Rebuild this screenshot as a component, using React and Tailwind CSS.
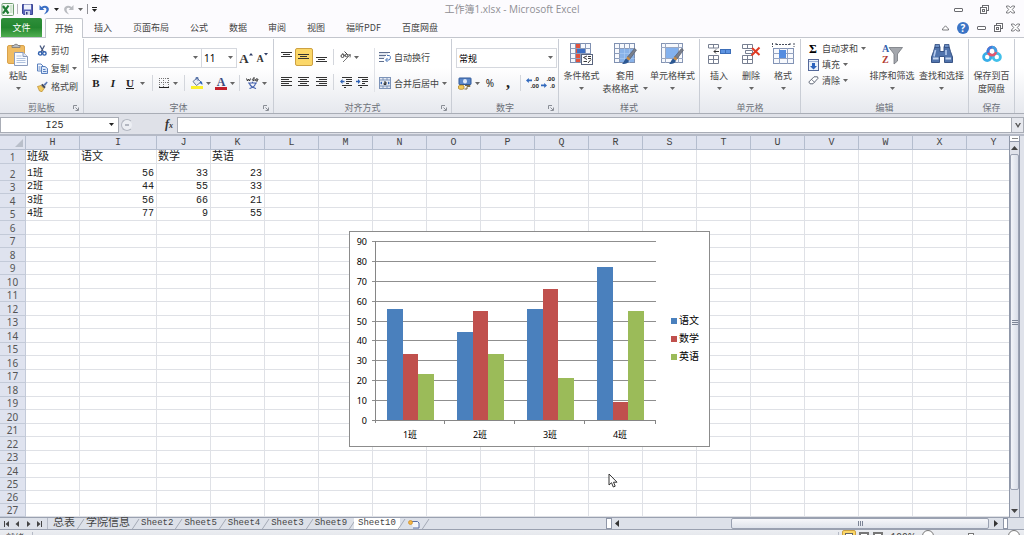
import React from "react";

const MENU_TABS = ["插入", "页面布局", "公式", "数据", "审阅", "视图", "福昕PDF", "百度网盘"];

const COLUMNS = ["H", "I", "J", "K", "L", "M", "N", "O", "P", "Q", "R", "S", "T", "U", "V", "W", "X", "Y"];

const CELLS = [
  ["班级", "语文", "数学", "英语"],
  ["1班", 56, 33, 23],
  ["2班", 44, 55, 33],
  ["3班", 56, 66, 21],
  ["4班", 77, 9, 55],
];

const ROWS = Array.from({ length: 27 }, (_, i) => i + 1);

const SHEETS = ["总表", "学院信息", "Sheet2", "Sheet5", "Sheet4", "Sheet3", "Sheet9"];

const SERIES = [
  { name: "语文", color: "#4a80bd" },
  { name: "数学", color: "#c0504d" },
  { name: "英语", color: "#9bbb59" },
];

function Caret({ dark }) {
  return (
    <svg width="5" height="3" viewBox="0 0 5 3" className="shrink-0">
      <path d="M0 0h5L2.5 3z" fill={dark ? "#222" : "#666"} />
    </svg>
  );
}

function Divider() {
  return <span className="h-4 w-px shrink-0 bg-[#d3d6dc]" />;
}

/* ---------- window icons ---------- */

function MinIcon() {
  return (
    <svg width="9" height="9" viewBox="0 0 9 9">
      <rect x="0.5" y="3.5" width="8" height="3" rx="0.5" fill="#fff" stroke="#6b6b70" />
    </svg>
  );
}

function RestoreIcon() {
  return (
    <svg width="9" height="9" viewBox="0 0 9 9" fill="#fff" stroke="#6b6b70">
      <rect x="2.5" y="0.5" width="6" height="5" />
      <rect x="0.5" y="2.5" width="6" height="6" />
      <rect x="2.5" y="4.5" width="2" height="2" />
    </svg>
  );
}

function CloseIcon() {
  return (
    <svg width="9" height="9" viewBox="0 0 9 9">
      <path d="M0.5 1h2.3l1.7 1.8L6.2 1h2.3v1L6.3 4.5l2.2 2.5v1H6.2L4.5 6.2 2.8 8H0.5V7l2.2-2.5L0.5 2z" fill="#fff" stroke="#6b6b70" strokeWidth="0.9" />
    </svg>
  );
}

/* ---------- quick access icons ---------- */

function ExcelIcon() {
  return (
    <svg width="13" height="13" viewBox="0 0 13 13">
      <rect x="1" y="0.5" width="11.5" height="12" rx="1" fill="#f4faf4" stroke="#6f9d72" />
      <path d="M9 3h2.5M9 5h2.5M9 7h2.5M9 9h2.5" stroke="#9fc5a0" strokeWidth="0.8" />
      <path d="M2 3l5.5 7.5M7.5 2.5L2 10.5" stroke="#1f7c35" strokeWidth="2.2" />
    </svg>
  );
}

function SaveIcon() {
  return (
    <svg width="11" height="11" viewBox="0 0 11 11">
      <path d="M0.5 0.5h10v10h-9l-1-1z" fill="#5a64b8" stroke="#3c4594" />
      <rect x="2" y="0.5" width="7" height="5" fill="#eef1fb" />
      <rect x="3" y="7" width="5" height="4" fill="#cfd5ea" />
      <rect x="4" y="8" width="1.5" height="2.5" fill="#333a7a" />
    </svg>
  );
}

function UndoIcon({ color, flip }) {
  return (
    <svg width="11" height="11" viewBox="0 0 11 11" className={flip ? "-scale-x-100" : ""}>
      <path d="M0.5 1v5h5L3.8 4.4C6 3 8 4.2 7.3 6.6 7 8 6 9.2 4.8 10.4 8 9.4 10 7.5 9.9 5 9.7 1.8 5.5 0.5 2.4 3z" fill={color} />
    </svg>
  );
}

/* ---------- ribbon icons ---------- */

function PasteIcon() {
  return (
    <svg width="22" height="23" viewBox="0 0 22 23">
      <rect x="0.5" y="2.5" width="17" height="18" rx="1.5" fill="#f0bc62" stroke="#d9a24c" />
      <path d="M5 4.5V2.5h2C7 0.8 11 0.8 11 2.5h2v2z" fill="#b9bcc2" stroke="#777" strokeWidth="0.8" />
      <path d="M7.5 9.5h8.5l4.5 4v9h-13z" fill="#fafcff" stroke="#8b9bbb" />
      <path d="M16 9.5v4h4.5" fill="#dfe7f5" stroke="#8b9bbb" />
      <path d="M9.5 13h5M9.5 15.5h9M9.5 17.5h9M9.5 19.5h9" stroke="#9db2d6" strokeWidth="0.8" />
    </svg>
  );
}

function CutIcon() {
  return (
    <svg width="11" height="11" viewBox="0 0 11 11" fill="none">
      <path d="M3 0.5l3.5 6.5M7.5 0.5L4 7" stroke="#4a5a80" strokeWidth="1.3" />
      <circle cx="3.2" cy="8.4" r="1.7" stroke="#2e5fae" strokeWidth="1.4" />
      <circle cx="7.4" cy="8.4" r="1.7" stroke="#2e5fae" strokeWidth="1.4" />
    </svg>
  );
}

function CopyIcon() {
  return (
    <svg width="11" height="11" viewBox="0 0 11 11" fill="#f7faff" stroke="#4a74b8" strokeWidth="0.9">
      <path d="M0.5 1h3.5l2 2v5h-5.5z" />
      <path d="M4.5 3.5H8l2.5 2V10.5h-6z" fill="#dde9fb" />
      <path d="M1.5 4h2M1.5 6h2M6 6.5h2.5M6 8.5h3.5" />
    </svg>
  );
}

function BrushIcon() {
  return (
    <svg width="11" height="11" viewBox="0 0 11 11">
      <path d="M0.5 5.5L4 4.5l3 3-2 3.2-2.5-0.7z" fill="#f1cb62" stroke="#bb8b29" strokeWidth="0.7" />
      <path d="M4 4l1.5-1.2 3.2 3.2L7.3 7.5z" fill="#444a58" />
      <path d="M6.5 3.5L9.8 0.5l0.9 1L8 5z" fill="#5b79b5" />
    </svg>
  );
}

function BorderIcon() {
  return (
    <svg width="10" height="10" viewBox="0 0 10 10" stroke="#777" strokeDasharray="1 1">
      <path d="M0 0.5h10M0 4.5h10M0.5 0v9M4.5 0v9M9.5 0v9" />
      <path d="M0 9.5h10" stroke="#222" strokeDasharray="none" />
    </svg>
  );
}

function FillIcon() {
  return (
    <svg width="12" height="12" viewBox="0 0 12 12">
      <path d="M2 4.5L6 1l4 4-4.5 3.5z" fill="#e8edf6" stroke="#5a6b8d" strokeWidth="0.9" />
      <path d="M5 3V0.5h2V4" fill="none" stroke="#4f6eaa" strokeWidth="0.9" />
      <path d="M9.5 4c1.5 0.5 2.3 2 1.8 4C10.5 7 9.5 6.5 8.5 6z" fill="#2f65b9" />
      <rect y="9" width="12" height="3" fill="#fbf02c" />
    </svg>
  );
}

function PhoneticIcon() {
  return (
    <svg width="13" height="12" viewBox="0 0 13 12" fill="none">
      <path d="M0.5 1.5l1 2.5 1-2 1 2 1-2.5M8 0v4M8 2C6 1 5.5 4 8 3.5M9.5 3h2.5c0-2-2.5-1.5-2.5 0 0 1.3 1.5 1.3 2.5 0.7" stroke="#333" />
      <path d="M2 6h9M6.5 4.8V6M3.5 11.5C7 10.5 9 9 9.5 6.5M3.5 6.5c0.8 2.5 3 4 6.5 5" stroke="#4461ae" strokeWidth="1.2" />
    </svg>
  );
}

function LinesIcon({ lines, top }) {
  return (
    <svg width="12" height="12" viewBox="0 0 12 12" stroke="#333">
      {lines.map(([x1, x2], i) => (
        <path key={i} d={`M${x1} ${top + i * 2 + 0.5}H${x2}`} />
      ))}
    </svg>
  );
}

function OrientIcon() {
  return (
    <svg width="12" height="12" viewBox="0 0 12 12" fill="none" stroke="#444">
      <circle cx="2.5" cy="5" r="1.5" />
      <path d="M2.5 2.2l3 3M4.5 0.5l3.5 3.5" />
      <circle cx="6.5" cy="4.5" r="1.3" />
      <path d="M3 11l7-7M10.5 3.5l-3 0.5M10.5 3.5L10 6.5" stroke="#777" />
    </svg>
  );
}

function IndentIcon({ flip }) {
  return (
    <svg width="12" height="11" viewBox="0 0 12 11">
      <path d="M2 0.5h10M6 2.5h6M6 4.5h6M6 6.5h3M2 8.5h10M4 10.5h2" stroke="#333" />
      <path d={flip ? "M4.5 4.5L2 2v1.8H0v1.5h2V7z" : "M0 4.5L2.5 2v1.8h2v1.5h-2V7z"} fill="#2f62b5" />
    </svg>
  );
}

function WrapIcon() {
  return (
    <svg width="12" height="11" viewBox="0 0 12 11" fill="none">
      <path d="M0 0.5h11M0 3.5h7M0 6.5h5M0 9.5h5" stroke="#5f6f8f" />
      <path d="M0 2h9M0 5h6" stroke="#c4cede" />
      <path d="M8 3.5h2.5c1.3 0.5 1.3 4-0.5 4.5H7M8.5 6L6.5 8l2 2" stroke="#4774b9" />
    </svg>
  );
}

function MergeIcon() {
  return (
    <svg width="12" height="12" viewBox="0 0 12 12">
      <rect x="0.5" y="0.5" width="11" height="11" fill="#e3e9f3" stroke="#7d93b8" />
      <path d="M0 3h12M0 9h12M4 0v3M8 0v3M4 9v3M8 9v3" stroke="#7d93b8" />
      <path d="M1 6l2-1.5v3zM11 6L9 4.5v3z" fill="#2b5eb0" />
      <path d="M5 5h2v2.5H5V6.2h2" fill="none" stroke="#222" strokeWidth="0.9" />
    </svg>
  );
}

function MoneyIcon() {
  return (
    <svg width="14" height="13" viewBox="0 0 14 13">
      <rect x="1" y="1" width="12" height="6.5" rx="0.5" fill="#5b87c9" stroke="#2f5796" />
      <ellipse cx="7" cy="4.2" rx="2" ry="2.2" fill="#dfe9f8" />
      <path d="M0.5 9c1-1.2 4.5-1.2 5.5 0v2.5c-1 1.2-4.5 1.2-5.5 0z" fill="#f1c856" stroke="#a67c1e" strokeWidth="0.7" />
      <path d="M7 8.5h5v1H9v2.5H6.5" fill="none" stroke="#7b6a42" />
    </svg>
  );
}

function DecimalIcon({ less }) {
  return (
    <span className="relative block h-3.5 w-3 text-right text-[6px] leading-[7px] font-bold text-[#333]">
      <span className="block">{less ? ".00" : ".0"}</span>
      <span className="block">{less ? ".0" : ".00"}</span>
      <svg width="6" height="5" viewBox="0 0 6 5" className={less ? "absolute bottom-0.5 -left-0.5 -scale-x-100" : "absolute top-0.5 -left-px"}>
        <path d="M0 2.5L2.8 0v1.6H6v1.6H2.8V5z" fill="#3169bd" />
      </svg>
    </span>
  );
}

function GridBase() {
  return (
    <>
      <rect x="0.5" y="0.5" width="20" height="19" fill="#f7f9fd" stroke="#7f90b1" />
      <path d="M0.5 5.5h20M0.5 10.5h20M0.5 15.5h20M5.5 0.5v19M10.5 0.5v19M15.5 0.5v19" stroke="#8c9cba" />
    </>
  );
}

function Brush() {
  return (
    <>
      <path d="M20.5 5.5L22.5 7 16 16l-2.5-2z" fill="#7a7f8b" stroke="#4e535e" strokeWidth="0.6" />
      <path d="M13.5 13.5l2.8 2.2-1.3 2-2.8-2z" fill="#c98a42" />
      <path d="M12 15.5l3 2.3C14 20.5 11 21.5 8 21c2-1.5 2-4 4-5.5z" fill="#2b5792" />
    </>
  );
}

function CondIcon() {
  return (
    <svg width="23" height="22" viewBox="0 0 23 22">
      <GridBase />
      <path d="M6 1h4v4H6zM6 6h9v4H6z" fill="#e0523d" />
      <path d="M6 11h4v4H6zM6 16h4v3H6z" fill="#e0523d" />
      <rect x="7" y="6" width="8" height="4" fill="#3d6fc4" />
      <rect x="11.5" y="11.5" width="11" height="10" fill="#fff" stroke="#59647d" />
      <path d="M17 13l-3.5 1.5L17 16.5M13.5 18.5h3.5M18 13.5h3M18 15.5h3M18 20l3-3.5" fill="none" stroke="#222" strokeWidth="0.9" />
    </svg>
  );
}

function TableStyleIcon() {
  return (
    <svg width="23" height="22" viewBox="0 0 23 22">
      <GridBase />
      <path d="M6 6h14v13H6z" fill="#6ba0e4" fillOpacity="0.8" />
      <path d="M5.5 10.5h15M5.5 15.5h15M10.5 5.5v14M15.5 5.5v14" stroke="#a9cbf5" strokeWidth="0.8" />
      <Brush />
    </svg>
  );
}

function CellStyleIcon() {
  return (
    <svg width="23" height="22" viewBox="0 0 23 22">
      <rect x="0.5" y="0.5" width="21" height="19" fill="#f7f9fd" stroke="#8595b4" />
      <path d="M0 4.5h22M0 15.5h22M4.5 0v20M17.5 0v20" stroke="#9aa8c3" />
      <rect x="5" y="5" width="12" height="10" fill="#83b1ee" />
      <Brush />
    </svg>
  );
}

function InsertIcon() {
  return (
    <svg width="23" height="20" viewBox="0 0 23 20" fill="#fff" stroke="#777f91">
      <path d="M0.5 0.5h10v3.5h-10zM5.5 0.5v3.5M0.5 11.5h10v8h-10zM0.5 15.5h10M5.5 11.5v8" />
      <rect x="12.5" y="5.5" width="10" height="4" fill="#5d93e1" stroke="#3d6eb8" />
      <path d="M17.5 5.5v4" stroke="#3d6eb8" />
      <path d="M11 7.5H6M8 5.5l-2 2 2 2" fill="none" stroke="#333" />
    </svg>
  );
}

function DeleteIcon() {
  return (
    <svg width="20" height="20" viewBox="0 0 20 20" fill="#fff" stroke="#777f91">
      <path d="M1.5 0.5h10v4h-10zM6.5 0.5v4M1.5 11.5h10v8h-10zM1.5 15.5h10M6.5 11.5v8M4.5 6.5h7v3h-7z" />
      <path d="M11 4l7.5 7M18.5 3.5L10.5 11.5" stroke="#df3a24" strokeWidth="2" />
    </svg>
  );
}

function FormatIcon() {
  return (
    <svg width="23" height="22" viewBox="0 0 23 22">
      <path d="M0.5 0v4M4 1.5h14M22 0v4M4 0v3M18 0v3" stroke="#454c5b" strokeDasharray="2 1" />
      <rect x="1.5" y="5.5" width="20" height="15" fill="#f7f9fd" stroke="#8293b5" />
      <path d="M1 10.5h21M1 15.5h21M7.5 5v16M15.5 5v16" stroke="#94a3c1" />
      <rect x="7" y="7" width="7" height="8" fill="#548ce0" />
    </svg>
  );
}

function SortIcon() {
  return (
    <svg width="22" height="22" viewBox="0 0 22 22" className="font-['Liberation_Serif',serif] text-[10px] font-bold">
      <path d="M8 4.5h13.5L16.5 11v7l-3.5 3V11z" fill="#a4a7ad" stroke="#74777e" strokeWidth="0.8" />
      <text x="1" y="9" fill="#3360ac">A</text>
      <text x="1" y="19.5" fill="#b23a32">Z</text>
    </svg>
  );
}

function FindIcon() {
  return (
    <svg width="22" height="20" viewBox="0 0 22 20">
      <path d="M4 2.5h5v5h4v-5h5l1.5 5 2 5.5v5.5h-8v-6h-5v6h-8V13l2-5.5z" fill="#5174ad" stroke="#2e4a7d" strokeWidth="0.9" />
      <path d="M4 0.5h4.5v3H4zM13.5 0.5H18v3h-4.5z" fill="#6d8fc4" stroke="#2e4a7d" strokeWidth="0.8" />
      <path d="M4.5 6L3 12.5M15 6v5" stroke="#b5cbee" strokeWidth="1.6" />
      <path d="M2 14.5h5.5M14.5 14.5H20" stroke="#c5d5ee" strokeWidth="1.8" />
    </svg>
  );
}

function BaiduIcon() {
  return (
    <svg width="20" height="18" viewBox="0 0 20 18" fill="none" strokeWidth="2.8">
      <circle cx="5.2" cy="12" r="3.6" stroke="#38aee8" />
      <circle cx="14.8" cy="12" r="3.6" stroke="#42c0ea" />
      <circle cx="10" cy="6.2" r="4" stroke="#e4556d" />
      <path d="M6.2 7.8A4.2 4.2 0 0 1 10 2.2" stroke="#3b7fe0" />
      <path d="M10 2.2a4 4 0 0 1 3.8 5" stroke="#3fa0e6" />
    </svg>
  );
}

function FillDownIcon() {
  return (
    <svg width="11" height="12" viewBox="0 0 11 12">
      <rect x="0.5" y="0.5" width="10" height="11" fill="#eaf1fb" stroke="#55699a" />
      <path d="M1 2.5h9" stroke="#9aaed4" />
      <path d="M4 4h3v3h2L5.5 10.5 2 7h2z" fill="#2b62bd" />
    </svg>
  );
}

function EraserIcon() {
  return (
    <svg width="11" height="9" viewBox="0 0 11 9">
      <path d="M0.8 6L6 0.8h3.5l0.5 1.5L5 7.8H2z" fill="#fff" stroke="#555c6c" strokeWidth="0.9" />
      <path d="M3.5 3.3l3 3" stroke="#555c6c" strokeWidth="0.8" />
    </svg>
  );
}

/* ---------- ribbon building blocks ---------- */

function Group({ label, launcher, className, children }) {
  return (
    <section className={"flex shrink-0 flex-col border-r border-[#c9cdd5] " + className}>
      <div className="h-[62px]">{children}</div>
      <div className="relative flex h-3 items-center justify-center text-[#6c7078]">
        {label}
        {launcher && (
          <button aria-label={label + "设置"} className="absolute top-1 right-1">
            <svg width="6" height="6" viewBox="0 0 6 6" fill="none" stroke="#8a8e96">
              <path d="M0.5 4V0.5H4M2.5 2.5L5 5M5.5 2.5v3h-3" />
            </svg>
          </button>
        )}
      </div>
    </section>
  );
}

function BigButton({ icon, label, second, className, noCaret }) {
  return (
    <button className={"flex shrink-0 flex-col items-center whitespace-nowrap " + className}>
      <span className="mb-1 flex h-[22px] items-center">{icon}</span>
      <span className="h-[13px] leading-[13px]">{label}</span>
      <span className="flex h-[13px] items-center gap-1 leading-[13px]">
        {second}
        {!noCaret && <Caret />}
      </span>
    </button>
  );
}

function SmallButton({ icon, label, caret }) {
  return (
    <button className="flex items-center gap-[3px] whitespace-nowrap">
      <span className="flex w-3 justify-center">{icon}</span>
      {label}
      {caret && <Caret />}
    </button>
  );
}

function IconButton({ label, className, children }) {
  return (
    <button aria-label={label} className={"flex h-4 shrink-0 items-center justify-center " + className}>
      {children}
    </button>
  );
}

function Combo({ label, value, className }) {
  return (
    <label className={"relative block shrink-0 " + className}>
      <select aria-label={label} className="block h-5 w-full appearance-none border border-[#d5d8de] bg-white pl-0.5 text-black outline-none">
        <option>{value}</option>
      </select>
      <span className="pointer-events-none absolute top-2 right-1">
        <Caret />
      </span>
    </label>
  );
}

/* ---------- top of the window ---------- */

function TitleBar() {
  return (
    <header className="grid h-[18px] grid-cols-[1fr_auto_1fr] items-center">
      <div className="flex items-center pl-px">
        <ExcelIcon />
        <span className="mx-[3px] h-2.5 w-px bg-[#b5b5ba]" />
        <button aria-label="保存" className="ml-px"><SaveIcon /></button>
        <button aria-label="撤消" className="ml-1.5 flex items-center gap-1"><UndoIcon color="#3b6fc5" /><Caret dark /></button>
        <button aria-label="恢复" className="ml-1 flex items-center gap-1"><UndoIcon color="#b9bbc0" flip /><Caret /></button>
        <span className="mx-1 h-2.5 w-px bg-[#909096]" />
        <button aria-label="自定义快速访问工具栏" className="flex flex-col items-center gap-px">
          <span className="h-px w-[5px] bg-[#222]" />
          <Caret dark />
        </button>
      </div>
      <h1 className="font-['Open_Sans','Noto_Sans_CJK_SC',sans-serif] text-[10px] text-[#8f8f94]">工作簿1.xlsx - Microsoft Excel</h1>
      <div className="flex justify-end gap-[17px] pr-[9px]">
        <button aria-label="最小化"><MinIcon /></button>
        <button aria-label="还原"><RestoreIcon /></button>
        <button aria-label="关闭"><CloseIcon /></button>
      </div>
    </header>
  );
}

function MenuTabs() {
  return (
    <nav className="flex h-5 items-stretch border-b border-[#c3c6cd] text-[#444]">
      <button className="ml-px w-[41px] rounded-t-xs bg-linear-to-b from-[#2f8f3b] via-[#23862f] to-[#4fae50] text-white">文件</button>
      <button className="-mb-px ml-[3px] rounded-t-xs border border-b-0 border-[#c3c6cd] bg-white px-[9px]">开始</button>
      {MENU_TABS.map((tab) => (
        <button key={tab} className="ml-px px-2.5">{tab}</button>
      ))}
      <div className="ml-auto flex items-center gap-2 pr-1">
        <button aria-label="折叠功能区">
          <svg width="7" height="6" viewBox="0 0 7 6" fill="#fff" stroke="#6b6b70" strokeWidth="0.9">
            <path d="M3.5 0.8L6.5 4v1h-6V4z" />
          </svg>
        </button>
        <button aria-label="帮助" className="h-3 w-3 rounded-full bg-[#3b74c6] font-['Open_Sans'] text-[10px] leading-3 font-bold text-white">?</button>
        <button aria-label="最小化工作簿"><MinIcon /></button>
        <button aria-label="还原工作簿"><RestoreIcon /></button>
        <button aria-label="关闭工作簿"><CloseIcon /></button>
      </div>
    </nav>
  );
}

function Ribbon() {
  return (
    <div className="flex border-b border-[#a9adb6] bg-linear-to-b from-white from-40% to-[#e6e8ee] pt-px text-[#444]">
      <Group label="剪贴板" launcher className="w-[84px]">
        <div className="flex pt-1">
          <BigButton icon={<PasteIcon />} label="粘贴" className="w-9" />
          <div className="flex flex-col gap-[5px] pt-px">
            <SmallButton icon={<CutIcon />} label="剪切" />
            <SmallButton icon={<CopyIcon />} label="复制" caret />
            <SmallButton icon={<BrushIcon />} label="格式刷" />
          </div>
        </div>
      </Group>

      <Group label="字体" launcher className="w-[190px]">
        <div className="flex items-center pt-[9px] pl-1">
          <Combo label="字体" value="宋体" className="w-[114px]" />
          <Combo label="字号" value="11" className="-ml-px w-9 font-['Noto_Sans'] text-[10px]" />
          <IconButton label="增大字号" className="ml-0.5 w-3.5 font-['Liberation_Serif'] text-[13px] font-bold text-[#333]">
            A<svg width="4" height="10" viewBox="0 0 4 10"><path d="M0 2.5L2 0l2 2.5z" fill="#2f3d66" /></svg>
          </IconButton>
          <IconButton label="减小字号" className="ml-0.5 w-3.5 font-['Liberation_Serif'] text-[10px] font-bold text-[#333]">
            A<svg width="4" height="10" viewBox="0 0 4 10"><path d="M0 0h4L2 2.5z" fill="#2f3d66" /></svg>
          </IconButton>
        </div>
        <div className="flex items-center pt-[7px] pl-1 font-['Liberation_Serif'] text-[11px] text-[#222]">
          <IconButton label="加粗" className="w-4 font-bold">B</IconButton>
          <IconButton label="倾斜" className="w-[18px] font-bold italic">I</IconButton>
          <IconButton label="下划线" className="w-4 font-bold underline">U</IconButton>
          <IconButton label="下划线选项" className="mr-1.5 w-2"><Caret /></IconButton>
          <Divider />
          <IconButton label="边框" className="mx-1.5 gap-1"><BorderIcon /><Caret /></IconButton>
          <Divider />
          <IconButton label="填充颜色" className="ml-1.5 gap-[3px]"><FillIcon /><Caret /></IconButton>
          <IconButton label="字体颜色" className="mx-1 gap-[3px]">
            <span className="block h-3.5 w-3 border-b-3 border-[#c3202b] text-[12px] leading-3 font-bold text-[#3a4a80]">A</span>
            <Caret />
          </IconButton>
          <Divider />
          <IconButton label="拼音" className="ml-1.5 gap-[3px]"><PhoneticIcon /><Caret /></IconButton>
        </div>
      </Group>

      <Group label="对齐方式" launcher className="w-[178px]">
        <div className="flex pt-[9px] pl-1">
          <div className="flex flex-col gap-[7px]">
            <div className="flex h-[18px] items-center">
              <IconButton label="顶端对齐" className="w-[17px]"><LinesIcon top={1} lines={[[0, 11], [2, 9], [0, 11]]} /></IconButton>
              <IconButton label="垂直居中" className="h-[18px] w-[18px] rounded-xs border border-[#cda142] bg-[#fbd768]"><LinesIcon top={3} lines={[[0, 11], [2, 9], [0, 11]]} /></IconButton>
              <IconButton label="底端对齐" className="w-[18px]"><LinesIcon top={6} lines={[[0, 11], [2, 9], [0, 11]]} /></IconButton>
              <span className="mr-1.5 ml-0.5 flex"><Divider /></span>
              <IconButton label="方向" className="gap-0.5"><OrientIcon /><Caret /></IconButton>
            </div>
            <div className="flex h-[18px] items-center">
              <IconButton label="左对齐" className="w-[17px]"><LinesIcon top={1} lines={[[0, 11], [0, 8], [0, 11], [0, 8], [0, 11]]} /></IconButton>
              <IconButton label="居中" className="w-[18px]"><LinesIcon top={1} lines={[[0, 11], [2, 9], [0, 11], [2, 9], [0, 11]]} /></IconButton>
              <IconButton label="右对齐" className="w-[18px]"><LinesIcon top={1} lines={[[0, 11], [3, 11], [0, 11], [3, 11], [0, 11]]} /></IconButton>
              <span className="mr-1.5 ml-0.5 flex"><Divider /></span>
              <IconButton label="减少缩进量"><IndentIcon /></IconButton>
              <IconButton label="增加缩进量" className="ml-1"><IndentIcon flip /></IconButton>
            </div>
          </div>
          <span className="mr-1 ml-1.5 h-11 w-px bg-[#e0e2e7]" />
          <div className="flex flex-col justify-between">
            <span className="flex h-[18px] items-center"><SmallButton icon={<WrapIcon />} label="自动换行" /></span>
            <span className="flex h-[18px] items-center"><SmallButton icon={<MergeIcon />} label="合并后居中" caret /></span>
          </div>
        </div>
      </Group>

      <Group label="数字" launcher className="w-[107px]">
        <div className="pt-[9px] pl-1">
          <Combo label="数字格式" value="常规" className="w-[101px]" />
        </div>
        <div className="flex items-center pt-[7px] pl-1.5 font-['Noto_Sans'] text-[10px] text-[#222]">
          <IconButton label="会计数字格式" className="gap-[3px]"><MoneyIcon /><Caret /></IconButton>
          <IconButton label="百分比样式" className="ml-1 w-3">%</IconButton>
          <IconButton label="千位分隔样式" className="mx-1.5 w-3 font-['Liberation_Serif'] text-[16px] leading-[8px] font-bold">,</IconButton>
          <Divider />
          <IconButton label="增加小数位数" className="ml-1.5"><DecimalIcon /></IconButton>
          <IconButton label="减少小数位数" className="ml-1"><DecimalIcon less /></IconButton>
        </div>
      </Group>

      <Group label="样式" className="w-[141px]">
        <div className="flex pt-1 pl-px">
          <BigButton icon={<CondIcon />} label="条件格式" className="w-[43px]" />
          <BigButton icon={<TableStyleIcon />} label="套用" second="表格格式" className="w-[44px]" />
          <BigButton icon={<CellStyleIcon />} label="单元格样式" className="w-[51px]" />
        </div>
      </Group>

      <Group label="单元格" className="w-[101px]">
        <div className="flex pt-1 pl-[3px]">
          <BigButton icon={<InsertIcon />} label="插入" className="w-8" />
          <BigButton icon={<DeleteIcon />} label="删除" className="w-8" />
          <BigButton icon={<FormatIcon />} label="格式" className="w-8" />
        </div>
      </Group>

      <Group label="编辑" className="w-[168px]">
        <div className="flex pt-[3px] pl-1.5">
          <div className="flex w-[61px] flex-col gap-[3px]">
            <SmallButton icon={<span className="font-['Liberation_Serif'] text-[12px] leading-3 font-bold text-black">Σ</span>} label="自动求和" caret />
            <SmallButton icon={<FillDownIcon />} label="填充" caret />
            <SmallButton icon={<EraserIcon />} label="清除" caret />
          </div>
          <div className="flex pt-px">
            <BigButton icon={<SortIcon />} label="排序和筛选" className="w-12" />
            <BigButton icon={<FindIcon />} label="查找和选择" className="w-[51px]" />
          </div>
        </div>
      </Group>

      <Group label="保存" className="w-[46px]">
        <div className="pt-1">
          <BigButton icon={<BaiduIcon />} label="保存到百" second="度网盘" noCaret className="w-full" />
        </div>
      </Group>
    </div>
  );
}

function FormulaBar() {
  return (
    <div className="flex h-[22px] border-b-2 border-[#b5bac6] bg-[#dfe1e8] pt-[3px] pb-px">
      <div className="relative w-[119px] border border-[#a9adb6] bg-white">
        <input aria-label="名称框" defaultValue="I25" className="block h-3.5 w-[107px] text-center font-['Liberation_Mono'] text-[10px] text-[#333] outline-none" />
        <span className="absolute top-[5px] right-1"><Caret dark /></span>
      </div>
      <div className="flex w-[58px] items-center justify-between pr-1 pl-0.5">
        <span className="flex h-3 w-3 items-center justify-center rounded-full border border-[#b3b7c1] border-r-[#dfe1e8] bg-[#eceef3]">
          <span className="h-0.5 w-1 bg-[#b3b7c1]" />
        </span>
        <button aria-label="插入函数" className="font-['Liberation_Serif'] text-[12px] leading-3 font-bold text-[#333] italic">
          f<span className="text-[8px]">x</span>
        </button>
      </div>
      <input aria-label="编辑栏" className="min-w-0 flex-1 border border-[#a9adb6] bg-white outline-none" />
      <button aria-label="展开编辑栏" className="flex w-3 items-center justify-center border border-l-0 border-[#a9adb6] bg-[#e6e8ee]">
        <svg width="6" height="5" viewBox="0 0 6 5"><path d="M0 0h1.5L3 2.5 4.5 0H6L3 5z" fill="#555" /></svg>
      </button>
    </div>
  );
}

/* ---------- sheet ---------- */

function colWidth(col) {
  return col === "I" ? "w-[77px]" : "w-[54px]";
}

function rowHeight(row) {
  if (row === 2) return "h-[17px]";
  if (row === 26) return "h-[13px]";
  return row === 1 || row % 2 === 0 ? "h-[14px]" : "h-[13px]";
}

function Grid() {
  return (
    <table className="w-max table-fixed border-separate border-spacing-0 font-['Liberation_Mono','Noto_Sans_CJK_SC',monospace] text-[10px] leading-3">
      <colgroup>
        <col className="w-[26px]" />
        {COLUMNS.map((c) => <col key={c} className={colWidth(c)} />)}
      </colgroup>
      <thead>
        <tr className="h-[14px] bg-[#dfe3ef] text-[#444]">
          <th className="border-r border-b border-[#b4bdce] p-0 pr-0.5">
            <svg width="8" height="8" viewBox="0 0 8 8" className="ml-auto"><path d="M8 0v8H0z" fill="#b9bfca" /></svg>
          </th>
          {COLUMNS.map((c) => (
            <th key={c} className="border-r border-b border-[#b4bdce] p-0 align-bottom font-normal">{c}</th>
          ))}
        </tr>
      </thead>
      <tbody>
        {ROWS.map((row) => (
          <tr key={row} className={rowHeight(row)}>
            <th className="border-r border-b border-[#c3cad8] bg-[#dfe3ef] p-0 align-bottom font-['Noto_Sans'] leading-3 font-normal text-[#555]">{row}</th>
            {COLUMNS.map((c, i) => {
              const value = CELLS[row - 1]?.[i];
              return (
                <td
                  key={c}
                  className={
                    "border-r border-b border-[#dfe1e6] p-0 pr-0.5 pl-px align-bottom text-[#222] " +
                    (row === 1 ? "text-[11px] " : "") +
                    (typeof value === "number" ? "text-right" : "text-left")
                  }
                >
                  {value}
                </td>
              );
            })}
          </tr>
        ))}
      </tbody>
    </table>
  );
}

const PLOT = { left: 25, right: 306, bottom: 188, height: 179, max: 90 };

function plotY(value) {
  return PLOT.bottom - Math.round((value * PLOT.height) / PLOT.max);
}

function Chart() {
  const { left, right, bottom } = PLOT;
  const groups = CELLS.slice(1);
  const step = (right - left) / groups.length;
  return (
    <svg width="359" height="214" viewBox="0 0 359 214" className="font-['Noto_Sans','Noto_Sans_CJK_SC',sans-serif] text-[9px]">
      {Array.from({ length: 10 }, (_, i) => {
        const y = plotY(i * 10) + 0.5;
        return (
          <g key={i}>
            <path d={`M${left - 3} ${y}H${right}`} stroke="#8f8f8f" />
            <text x={left - 8} y={y + 3} textAnchor="end">{i * 10}</text>
          </g>
        );
      })}
      {groups.map(([name, ...values], g) => {
        const x = left + Math.floor(g * step);
        return (
          <g key={name}>
            {values.map((v, s) => (
              <rect key={s} x={x + 12 + s * 16 - (s === 2 ? 1 : 0)} y={plotY(v)} width={s === 1 ? 15 : 16} height={bottom - plotY(v)} fill={SERIES[s].color} />
            ))}
            <text x={x + 35} y="206" textAnchor="middle">{name}</text>
          </g>
        );
      })}
      <path d={`M${left - 3} ${bottom + 0.5}H${right}M${left + 0.5} 9V${bottom + 3}`} stroke="#868686" />
      {groups.map(([name], g) => (
        <path key={name} d={`M${left + Math.floor((g + 1) * step) - 0.5} ${bottom}v4`} stroke="#868686" />
      ))}
      {SERIES.map((s, i) => (
        <g key={s.name}>
          <rect x="321" y={86 + i * 18} width="6" height="6" fill={s.color} />
          <text x="329" y={92 + i * 18} className="text-[10px]">{s.name}</text>
        </g>
      ))}
    </svg>
  );
}

function VerticalScroll() {
  return (
    <div className="flex w-[15px] shrink-0 flex-col bg-[#dfe2ea]">
      <div className="mr-1 flex flex-1 flex-col items-stretch border-x border-[#8f97a8]">
        <span className="flex h-1.5 items-center justify-center border-b border-[#8f97a8] bg-white"><span className="h-px w-1.5 bg-[#888]" /></span>
        <button aria-label="向上滚动" className="flex h-3 items-center justify-center">
          <svg width="7" height="4" viewBox="0 0 7 4"><path d="M0 4h7L3.5 0z" fill="#444" /></svg>
        </button>
        <div className="flex flex-1 flex-col items-center justify-center gap-px rounded-xs border border-[#9aa1b1] bg-linear-to-r from-[#f3f5f9] to-[#d9dee8]">
          <span className="h-px w-1.5 bg-[#7d8596]" />
          <span className="h-px w-1.5 bg-[#7d8596]" />
          <span className="h-px w-1.5 bg-[#7d8596]" />
        </div>
        <button aria-label="向下滚动" className="mt-[15px] flex h-3 items-center justify-center">
          <svg width="7" height="4" viewBox="0 0 7 4"><path d="M0 0h7L3.5 4z" fill="#444" /></svg>
        </button>
      </div>
    </div>
  );
}

/* ---------- bottom of the window ---------- */

function Slash() {
  return (
    <svg width="11" height="12" viewBox="0 0 11 12" className="shrink-0">
      <path d="M2 11.5L9 1" stroke="#a3a9b5" />
    </svg>
  );
}

function NavArrow({ label, d }) {
  return (
    <button aria-label={label}>
      <svg width="5" height="6" viewBox="0 0 5 6"><path d={d} fill="#444" /></svg>
    </button>
  );
}

function SheetBar() {
  return (
    <div className="flex h-[13px] items-stretch border-t border-b border-[#9aa1b0] bg-[#dde1e9]">
      <div className="flex w-12 items-center justify-between border-r border-[#b5bac6] pr-[5px] pl-1">
        <NavArrow label="第一张" d="M0 0h1v6H0zM5 0v6L1.5 3z" />
        <NavArrow label="上一张" d="M4 0v6L0.5 3z" />
        <NavArrow label="下一张" d="M1 0v6L4.5 3z" />
        <NavArrow label="最后一张" d="M4 0h1v6H4zM0 0v6L3.5 3z" />
      </div>
      <nav className="flex items-center pl-[5px] font-['Liberation_Mono','Noto_Sans_CJK_SC',monospace] text-[9px] leading-[11px] text-[#444]">
        {SHEETS.map((s) => (
          <React.Fragment key={s}>
            <button className={s.startsWith("Sheet") ? "" : "text-[11px]"}>{s}</button>
            <Slash />
          </React.Fragment>
        ))}
        <button className="-mx-1 h-full bg-white px-1">Sheet10</button>
        <Slash />
        <button aria-label="插入工作表">
          <svg width="13" height="10" viewBox="0 0 13 10">
            <path d="M4.5 2.5h6l1.5 1.5v5h-6" fill="#f4f6fb" stroke="#5a6fa5" />
            <circle cx="3.5" cy="3.5" r="2" fill="#f5b443" stroke="#c98a22" strokeWidth="0.7" />
          </svg>
        </button>
        <Slash />
      </nav>
      <div className="ml-auto flex w-[418px] items-center">
        <span className="h-full w-1.5 border border-[#8f97a8] bg-white" />
        <button aria-label="向左滚动" className="ml-[3px]">
          <svg width="4" height="7" viewBox="0 0 4 7"><path d="M4 0v7L0 3.5z" fill="#333" /></svg>
        </button>
        <div className="ml-28 flex h-full flex-1 items-center justify-center gap-px rounded-xs border border-[#9aa1b1] bg-linear-to-b from-[#f6f7fa] to-[#dfe3eb]">
          <span className="h-[5px] w-px bg-[#7d8596]" />
          <span className="h-[5px] w-px bg-[#7d8596]" />
          <span className="h-[5px] w-px bg-[#7d8596]" />
        </div>
        <button aria-label="向右滚动" className="mx-[5px]">
          <svg width="4" height="7" viewBox="0 0 4 7"><path d="M0 0v7l4-3.5z" fill="#333" /></svg>
        </button>
        <span className="mr-4 h-full w-[5px] border border-[#8f97a8] bg-white" />
      </div>
    </div>
  );
}

function StatusBar() {
  return (
    <footer className="flex h-[18px] items-start bg-linear-to-b from-[#eceef2] to-[#d6d9e0] pt-0.5 text-[#444]">
      <span className="pl-1.5 leading-3">就绪</span>
      <span className="ml-2 h-3.5 w-px bg-[#b5bac6]" />
      <span className="ml-auto h-3.5 w-px bg-[#b5bac6]" />
      <button aria-label="普通" className="-mt-0.5 ml-[3px] h-3.5 w-[14px] rounded-xs border border-[#cda142] bg-[#fbd768] p-0.5">
        <span className="block h-2 border border-[#666] bg-white" />
      </button>
      <button aria-label="页面布局" className="ml-[3px] h-2.5 w-2.5 border-2 border-[#777] bg-white" />
      <button aria-label="分页预览" className="ml-1 h-2.5 w-2.5 border-2 border-[#777] bg-white" />
      <button className="ml-2 font-['Noto_Sans'] text-[10px] leading-[11px]">100%</button>
      <button aria-label="缩小" className="-mt-0.5 ml-1.5 h-3 w-3 rounded-full border border-[#777] bg-white" />
      <span className="mx-[34px] mt-px h-2.5 w-1.5 border border-[#777] bg-white" />
      <button aria-label="放大" className="-mt-0.5 mr-1 h-3 w-3 rounded-full border border-[#777] bg-white" />
    </footer>
  );
}

export default function App() {
  return (
    <div className="flex h-screen flex-col overflow-hidden bg-[#fcfbfe] font-['Noto_Sans_CJK_SC',sans-serif] text-[9px] leading-[13px] [&>*]:shrink-0">
      <TitleBar />
      <MenuTabs />
      <Ribbon />
      <FormulaBar />
      <main className="flex bg-white">
        <div className="relative min-w-0 flex-1 overflow-hidden">
          <Grid />
          <div className="absolute top-[95px] left-[349px] border border-[#8c8c8c] bg-white">
            <Chart />
          </div>
          <svg width="10" height="15" viewBox="0 0 10 15" className="absolute top-[337px] left-[608px]">
            <path d="M1 1v11l2.5-2.3L5.3 14l1.9-0.8L5.5 9.2H9z" fill="#fff" stroke="#333" />
          </svg>
        </div>
        <VerticalScroll />
      </main>
      <SheetBar />
      <StatusBar />
    </div>
  );
}
